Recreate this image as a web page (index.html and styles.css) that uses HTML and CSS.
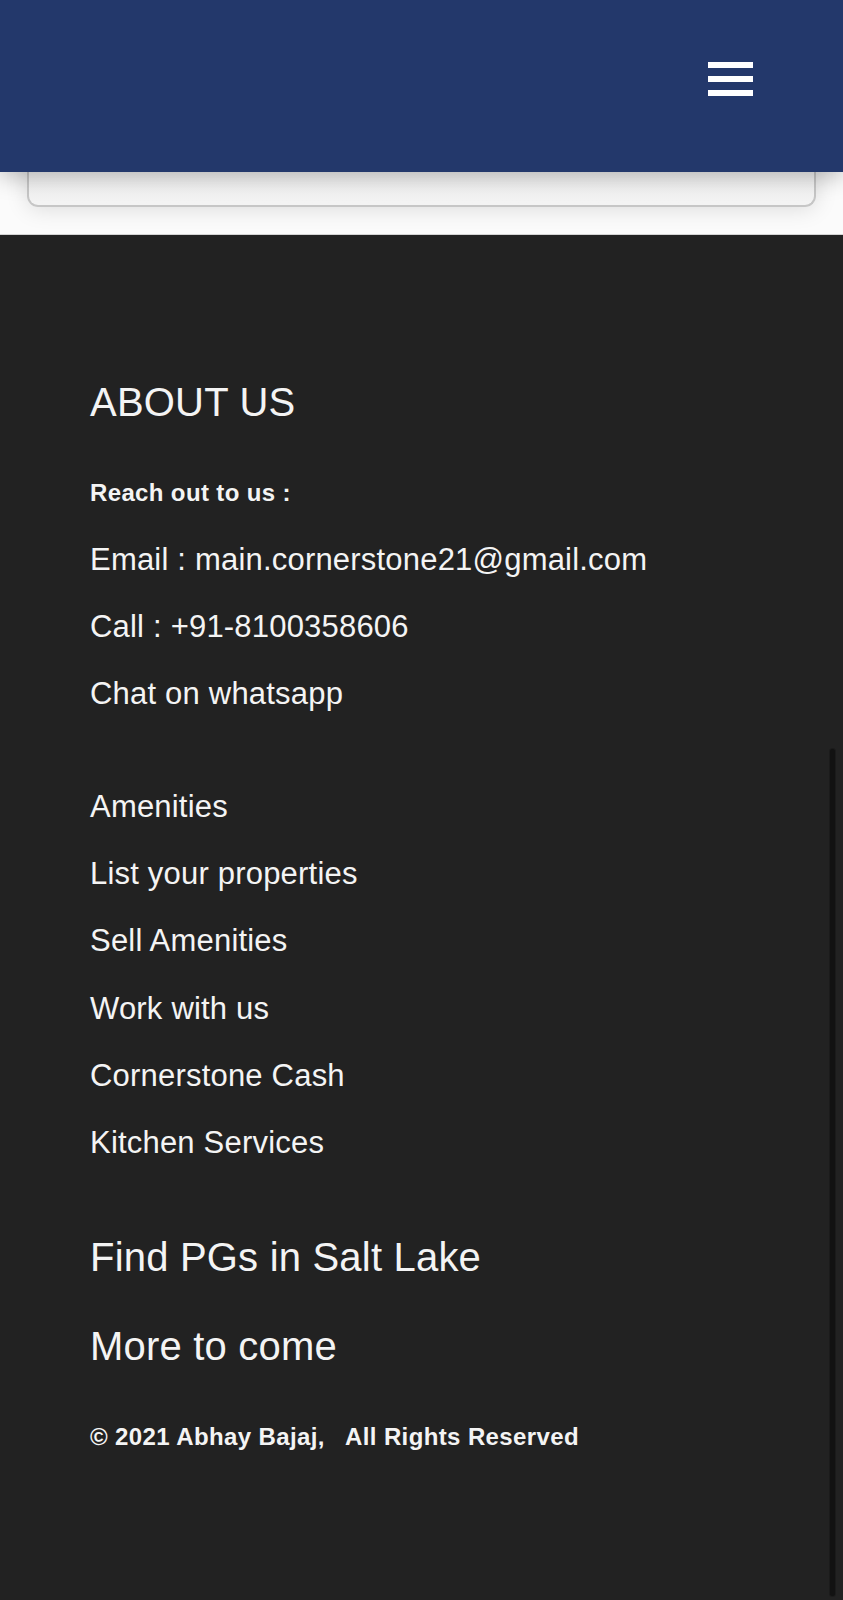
FILE: index.html
```html
<!DOCTYPE html>
<html lang="en">
<head>
<meta charset="utf-8">
<title>Cornerstone – About us</title>
<link rel="stylesheet" href="styles.css">
</head>
<body>
<header class="navbar">
  <button class="menu-btn" aria-label="Menu">
    <span class="bar"></span>
    <span class="bar"></span>
    <span class="bar"></span>
  </button>
</header>

<section class="top-area">
  <div class="card"></div>
</section>

<footer class="footer">
  <h2 class="footer-title">ABOUT US</h2>
  <p class="reach">Reach out to us :</p>
  <ul class="contact-list">
    <li>Email : main.cornerstone21@gmail.com</li>
    <li>Call : +91-8100358606</li>
    <li>Chat on whatsapp</li>
  </ul>
  <ul class="link-list">
    <li>Amenities</li>
    <li>List your properties</li>
    <li>Sell Amenities</li>
    <li>Work with us</li>
    <li>Cornerstone Cash</li>
    <li>Kitchen Services</li>
  </ul>
  <h2 class="footer-big first">Find PGs in Salt Lake</h2>
  <h2 class="footer-big second">More to come</h2>
  <p class="copyright">© 2021 Abhay Bajaj,&nbsp;&nbsp; All Rights Reserved</p>
</footer>

<div class="scroll-indicator"></div>
</body>
</html>
```

FILE: styles.css
```css
html, body {
  margin: 0;
  padding: 0;
}

body {
  font-family: "Liberation Sans", Arial, Helvetica, sans-serif;
  background: #222222;
  width: 843px;
  min-height: 1600px;
  overflow: hidden;
}

.navbar {
  position: absolute;
  top: 0;
  left: 0;
  right: 0;
  height: 172px;
  background: #23386b;
  box-shadow: 0 4px 22px rgba(0, 0, 0, 0.28);
  display: flex;
  justify-content: flex-end;
  align-items: flex-start;
  padding: 62px 90px 0 0;
  box-sizing: border-box;
  z-index: 5;
}

.menu-btn {
  background: none;
  border: 0;
  padding: 0;
  margin: 0;
  display: flex;
  flex-direction: column;
  gap: 8px;
  width: 45px;
  cursor: pointer;
}

.menu-btn .bar {
  display: block;
  width: 45px;
  height: 6px;
  background: #ffffff;
}

.top-area {
  background: #fbfbfb;
  padding: 0 27px 27px;
  border-bottom: 1px solid #d4d4d4;
}

.card {
  height: 207px;
  box-sizing: border-box;
  border: 2px solid #c6c6c6;
  border-top: 0;
  border-radius: 0 0 11px 11px;
  background: linear-gradient(#dcdcdc, #f1f1f1 70%, #f3f3f3);
  box-shadow: 0 2px 22px rgba(0, 0, 0, 0.13);
}

.footer {
  background: #222222;
  color: #f4f4f4;
  padding: 143px 0 150px 90px;
  letter-spacing: 0.2px;
}

.footer-title {
  font-size: 40px;
  line-height: 48px;
  font-weight: 400;
  margin: 0 0 53px;
}

.reach {
  font-size: 24px;
  line-height: 28px;
  font-weight: 700;
  letter-spacing: 0.36px;
  margin: 0 0 35px;
}

.contact-list,
.link-list {
  list-style: none;
  margin: 0;
  padding: 0;
  display: flex;
  flex-direction: column;
  gap: 31px;
  font-size: 31px;
  line-height: 36px;
}

.contact-list {
  margin-bottom: 77px;
}

.link-list {
  gap: 31.2px;
}

.footer-big {
  font-size: 40px;
  line-height: 48px;
  font-weight: 400;
  margin: 0;
}

.footer-big.first {
  margin-top: 72px;
}

.footer-big.second {
  margin-top: 41px;
}

.copyright {
  font-size: 24px;
  line-height: 28px;
  font-weight: 700;
  letter-spacing: 0.38px;
  margin: 53px 0 0;
}

.scroll-indicator {
  position: absolute;
  top: 748px;
  left: 829px;
  width: 7px;
  height: 849px;
  box-sizing: border-box;
  background: #121212;
  border: 1px solid rgba(255, 255, 255, 0.04);
  border-radius: 4px;
}
```
